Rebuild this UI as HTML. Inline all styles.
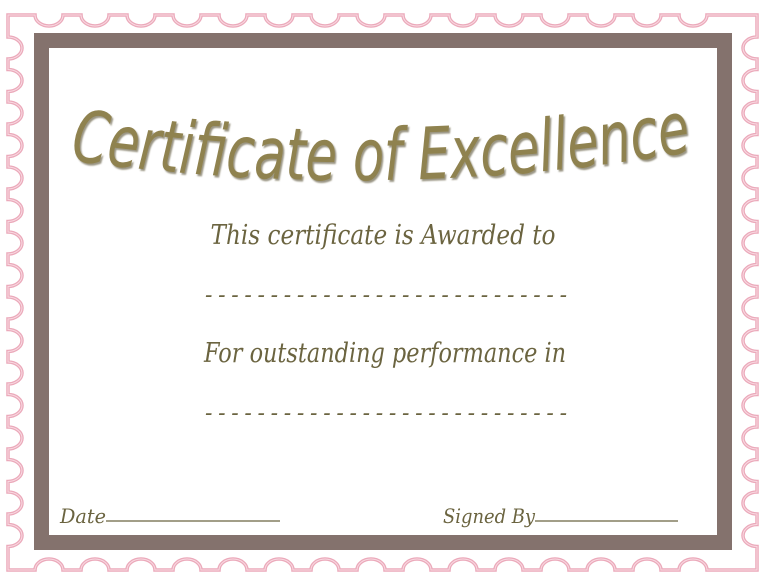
<!DOCTYPE html>
<html><head><meta charset="utf-8"><style>
html,body{margin:0;padding:0;background:#fff;width:764px;height:584px;overflow:hidden}
svg{display:block}
.s{font-family:"DejaVu Serif","Liberation Serif",serif;font-style:italic;fill:#6b6440}
</style></head><body>
<svg id="sv" width="764" height="584" viewBox="0 0 764 584" xmlns="http://www.w3.org/2000/svg">
<path id="scal" d="" fill="none" stroke="#eba9ba" stroke-width="3.5"/>
<path id="scal2" d="" fill="none" stroke="#f9dbe3" stroke-width="1"/>
<rect x="41.5" y="40.5" width="683" height="502" fill="none" stroke="#84726d" stroke-width="15"/>
<defs>
<path id="arc" d="M70 160 Q385 205 700 150"/>
<filter id="sh"><feDropShadow dx="1.5" dy="2" stdDeviation="0.8" flood-color="#4a4020" flood-opacity="0.55"/></filter>
</defs>
<text font-family="'DejaVu Sans','Liberation Sans',sans-serif" font-style="italic" font-size="72" fill="#8f8250" filter="url(#sh)" textLength="625" lengthAdjust="spacingAndGlyphs"><textPath href="#arc">Certificate of Excellence</textPath></text>
<text class="s" x="383" y="244" font-size="27" text-anchor="middle" textLength="345" lengthAdjust="spacingAndGlyphs">This certificate is Awarded to</text>
<text class="s" x="386" y="302" font-size="22" font-style="normal" text-anchor="middle" textLength="362" lengthAdjust="spacing">----------------------------</text>
<text class="s" x="385" y="362" font-size="27" text-anchor="middle" textLength="362" lengthAdjust="spacingAndGlyphs">For outstanding performance in</text>
<text class="s" x="386" y="420" font-size="22" font-style="normal" text-anchor="middle" textLength="362" lengthAdjust="spacing">----------------------------</text>
<text class="s" x="60" y="523" font-size="20" textLength="46" lengthAdjust="spacingAndGlyphs">Date</text>
<line x1="106" y1="521" x2="280" y2="521" stroke="#6b6440" stroke-width="1.3"/>
<text class="s" x="443" y="523" font-size="20" textLength="92" lengthAdjust="spacingAndGlyphs">Signed By</text>
<line x1="535" y1="521" x2="678" y2="521" stroke="#6b6440" stroke-width="1.3"/>
</svg>
<script>
(function(){
var L=8,T=15,R=757,B=570,rh=14,dh=11,rv=11,dv=14;
var d="M"+L+" "+T;
var hx=[];for(var x=49;x<R-30;x+=46)hx.push(x);
var vy=[];for(var y=48;y<B-25;y+=32.5)vy.push(y);
hx.forEach(function(c){d+=" L"+(c-rh)+" "+T+" A"+rh+" "+dh+" 0 0 0 "+(c+rh)+" "+T;});
d+=" L"+R+" "+T;
vy.forEach(function(c){d+=" L"+R+" "+(c-rv)+" A"+dv+" "+rv+" 0 0 0 "+R+" "+(c+rv);});
d+=" L"+R+" "+B;
hx.slice().reverse().forEach(function(c){d+=" L"+(c+rh)+" "+B+" A"+rh+" "+dh+" 0 0 0 "+(c-rh)+" "+B;});
d+=" L"+L+" "+B;
vy.slice().reverse().forEach(function(c){d+=" L"+L+" "+(c+rv)+" A"+dv+" "+rv+" 0 0 0 "+L+" "+(c-rv);});
d+=" Z";
document.getElementById("scal").setAttribute("d",d);
document.getElementById("scal2").setAttribute("d",d);
})();
</script>
</body></html>
